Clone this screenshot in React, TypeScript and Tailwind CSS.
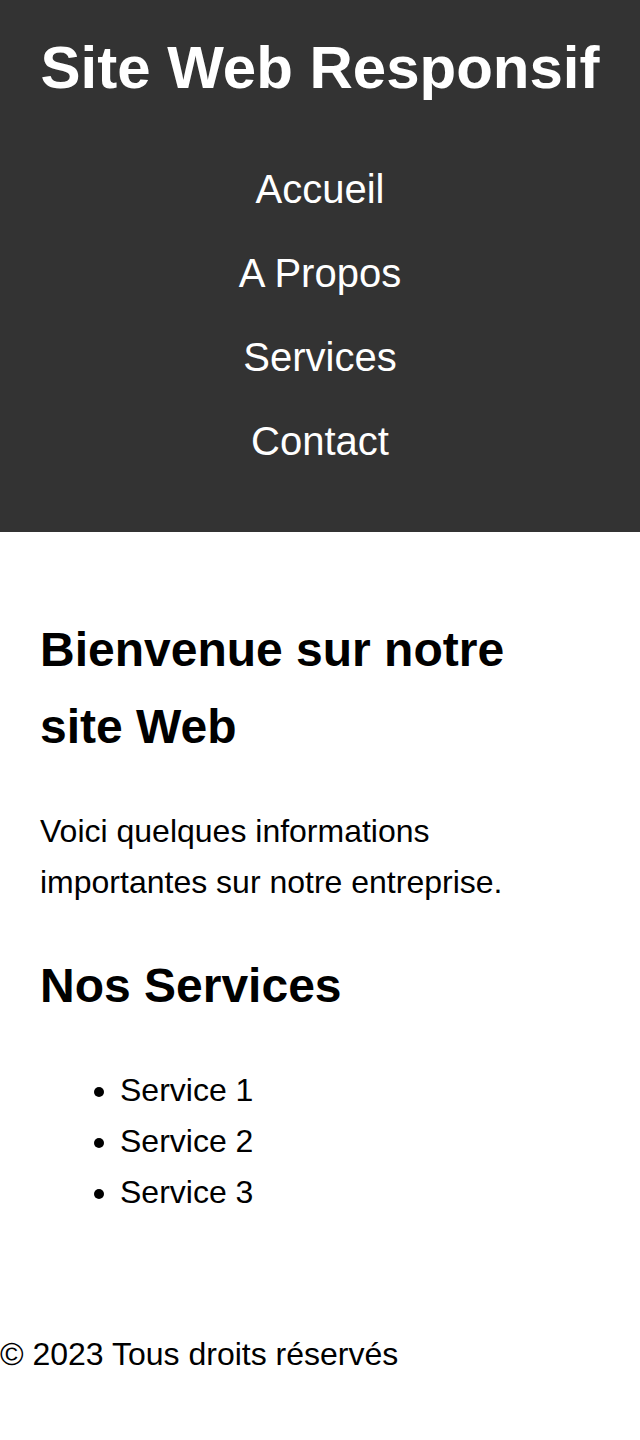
export default function App() {
  const nav = ["Accueil", "A Propos", "Services", "Contact"];
  const services = ["Service 1", "Service 2", "Service 3"];
  return (
    <div className="bg-white text-black leading-[1.6]" style={{ fontFamily: '"Liberation Sans", Arial, sans-serif' }}>
      <header className="bg-[#333333] text-white text-center pt-[20px] pb-[49px]">
        <h1 className="m-0 text-[60px] font-bold leading-[96px]">Site Web Responsif</h1>
        <nav className="mt-[31px]">
          <ul className="m-0 p-0 list-none">
            {nav.map((n) => (
              <li key={n} className="py-[10px] text-[40px] leading-[64px]">
                <a className="text-white no-underline">{n}</a>
              </li>
            ))}
          </ul>
        </nav>
      </header>
      <main className="p-[40px]">
        <h2 className="mt-[40px] mb-[40px] text-[48px] font-bold leading-[76.8px] pr-[80px]">Bienvenue sur notre site Web</h2>
        <p className="text-[32px] leading-[51.2px] mb-[40px] pr-[80px]">Voici quelques informations importantes sur notre entreprise.</p>
        <h2 className="mt-[40px] mb-[40px] text-[48px] font-bold leading-[76.8px]">Nos Services</h2>
        <ul className="list-disc pl-[80px] mb-[32px] text-[32px] leading-[51.2px]">
          {services.map((s) => (
            <li key={s}>{s}</li>
          ))}
        </ul>
      </main>
      <footer className="pt-[39px] pb-[40px] text-[32px] leading-[51.2px]">© 2023 Tous droits réservés</footer>
    </div>
  );
}
